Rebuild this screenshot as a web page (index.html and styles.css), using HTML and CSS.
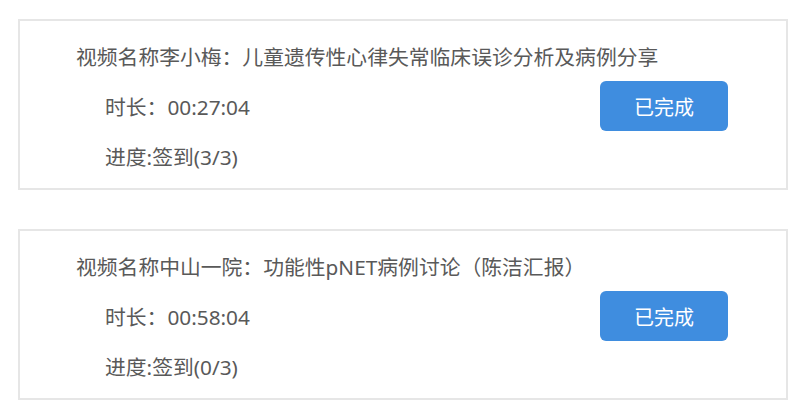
FILE: index.html
```html
<!DOCTYPE html>
<html lang="zh-CN">
<head>
    <meta charset="UTF-8" />
    <title>视频学习记录</title>
    <link rel="stylesheet" href="styles.css">
</head>
<body>
    <div class="list">
        <div class="card">
            <div class="title">视频名称李小梅：儿童遗传性心律失常临床误诊分析及病例分享</div>
            <div class="body">
                <div class="info">
                    <div class="line">时长：00:27:04</div>
                    <div class="line">进度:签到(3/3)</div>
                </div>
                <button class="done">已完成</button>
            </div>
        </div>

        <div class="card">
            <div class="title">视频名称中山一院：功能性pNET病例讨论（陈洁汇报）</div>
            <div class="body">
                <div class="info">
                    <div class="line">时长：00:58:04</div>
                    <div class="line">进度:签到(0/3)</div>
                </div>
                <button class="done">已完成</button>
            </div>
        </div>
    </div>
</body>
</html>
```

FILE: styles.css
```css
body {
    margin: 0;
    background: #ffffff;
    font-family: "Noto Sans", "Noto Sans CJK SC", sans-serif;
    color: #595959;
}
.list {
    display: flex;
    flex-direction: column;
    gap: 39px;
    padding: 19px 22px 0 18px;
}
.card {
    height: 171px;
    box-sizing: border-box;
    border: 2px solid #e6e6e6;
    padding: 11px 58px 0 56px;
}
.title {
    font-size: 20.8px;
    line-height: 50px;
    white-space: nowrap;
}
.body {
    display: flex;
    align-items: flex-start;
}
.info {
    padding-left: 29px;
}
.line {
    font-size: 20.8px;
    line-height: 50px;
}
.done {
    margin-left: auto;
    margin-top: -1px;
    width: 128px;
    height: 50px;
    border: none;
    border-radius: 6px;
    background-color: #3f8ddf;
    color: #ffffff;
    font-family: "Noto Sans CJK SC", sans-serif;
    font-size: 20px;
    cursor: pointer;
}
```
